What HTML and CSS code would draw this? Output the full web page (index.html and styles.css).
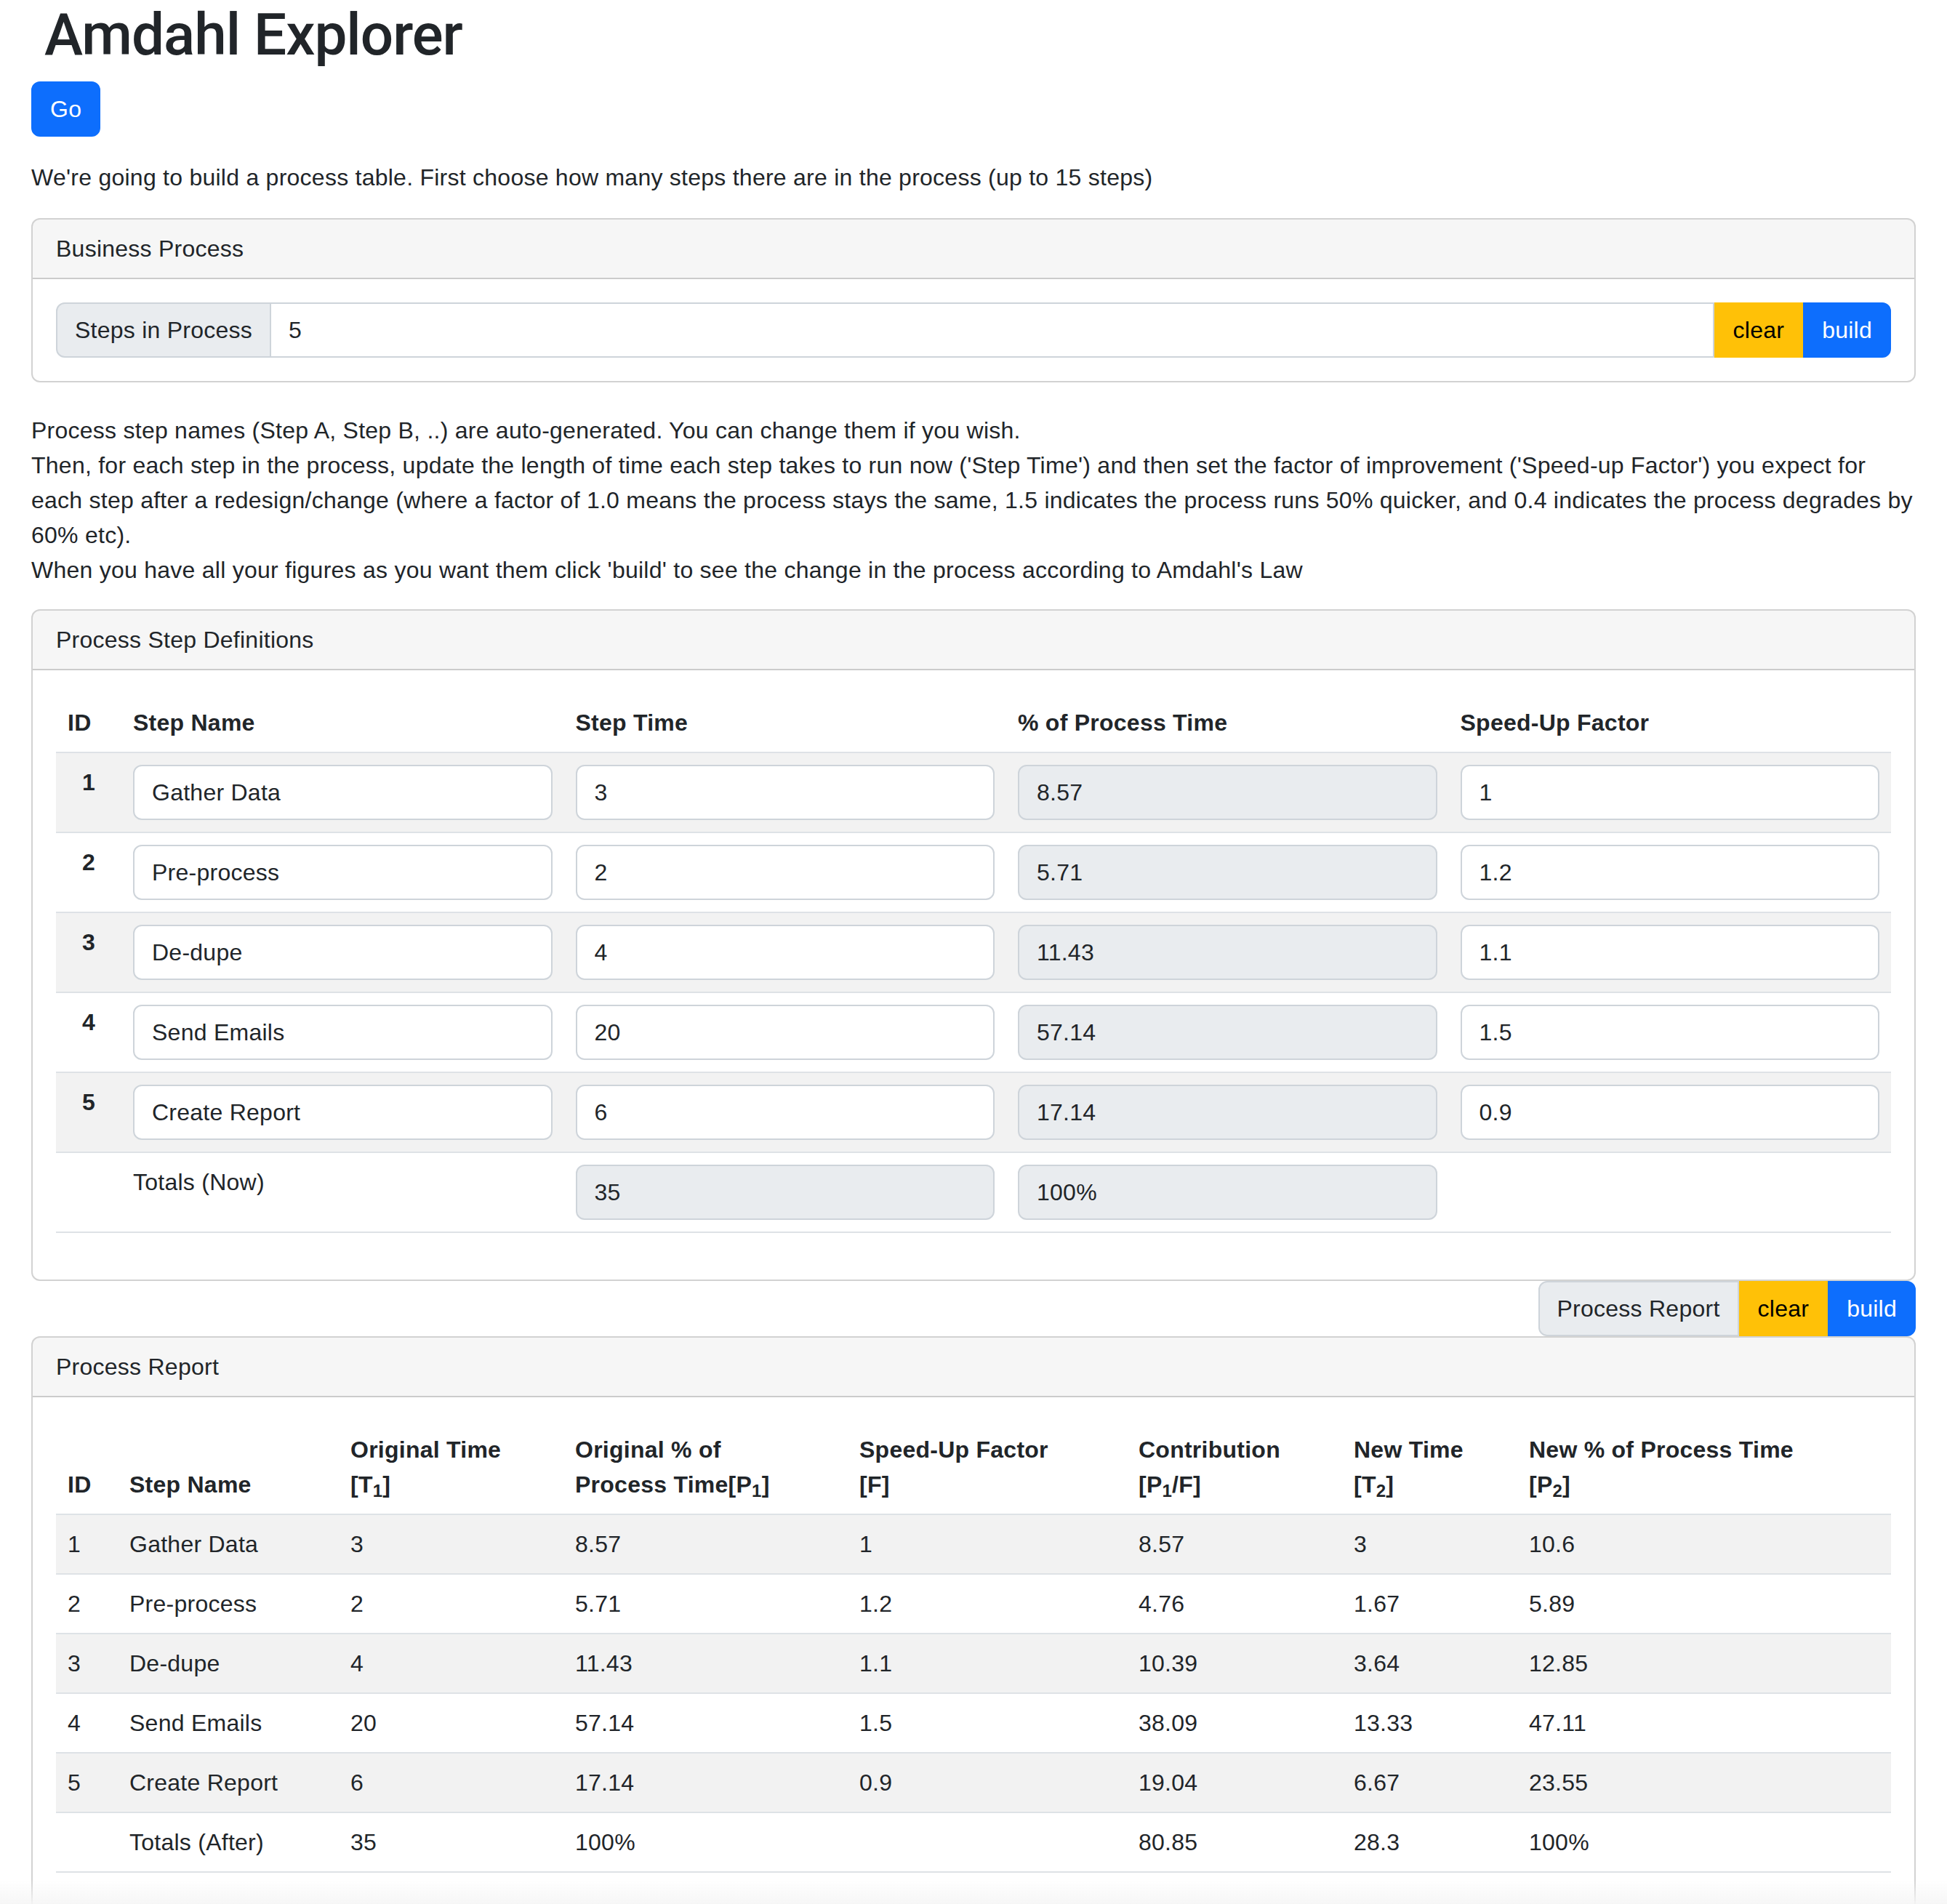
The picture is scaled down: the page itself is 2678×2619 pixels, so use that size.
FILE: index.html
```html
<!DOCTYPE html>
<html lang="en">
<head>
<meta charset="utf-8">
<title>Amdahl Explorer</title>
<link rel="stylesheet" href="styles.css">
</head>
<body>
<div class="page">
  <h1 class="title">Amdahl Explorer</h1>
  <div class="go-row"><button class="btn btn-primary">Go</button></div>
  <p class="intro">We're going to build a process table. First choose how many steps there are in the process (up to 15 steps)</p>

  <div class="card">
    <div class="card-header">Business Process</div>
    <div class="card-body">
      <div class="input-group">
        <span class="ig-text">Steps in Process</span>
        <input class="ig-input" type="text" value="5">
        <button class="btn btn-warning">clear</button>
        <button class="btn btn-primary">build</button>
      </div>
    </div>
  </div>

  <p class="instructions">Process step names (Step A, Step B, ..) are auto-generated. You can change them if you wish.<br>Then, for each step in the process, update the length of time each step takes to run now ('Step Time') and then set the factor of improvement ('Speed-up Factor') you expect for each step after a redesign/change (where a factor of 1.0 means the process stays the same, 1.5 indicates the process runs 50% quicker, and 0.4 indicates the process degrades by 60% etc).<br>When you have all your figures as you want them click 'build' to see the change in the process according to Amdahl's Law</p>

  <div class="card">
    <div class="card-header">Process Step Definitions</div>
    <div class="card-body">
      <table class="table defs">
        <thead>
          <tr>
            <th class="c-id">ID</th>
            <th>Step Name</th>
            <th>Step Time</th>
            <th>% of Process Time</th>
            <th>Speed-Up Factor</th>
          </tr>
        </thead>
        <tbody>
          <tr>
            <th class="row-id">1</th>
            <td><input class="fc" type="text" value="Gather Data"></td>
            <td><input class="fc" type="text" value="3"></td>
            <td><input class="fc ro" type="text" value="8.57" readonly></td>
            <td><input class="fc" type="text" value="1"></td>
          </tr>
          <tr>
            <th class="row-id">2</th>
            <td><input class="fc" type="text" value="Pre-process"></td>
            <td><input class="fc" type="text" value="2"></td>
            <td><input class="fc ro" type="text" value="5.71" readonly></td>
            <td><input class="fc" type="text" value="1.2"></td>
          </tr>
          <tr>
            <th class="row-id">3</th>
            <td><input class="fc" type="text" value="De-dupe"></td>
            <td><input class="fc" type="text" value="4"></td>
            <td><input class="fc ro" type="text" value="11.43" readonly></td>
            <td><input class="fc" type="text" value="1.1"></td>
          </tr>
          <tr>
            <th class="row-id">4</th>
            <td><input class="fc" type="text" value="Send Emails"></td>
            <td><input class="fc" type="text" value="20"></td>
            <td><input class="fc ro" type="text" value="57.14" readonly></td>
            <td><input class="fc" type="text" value="1.5"></td>
          </tr>
          <tr>
            <th class="row-id">5</th>
            <td><input class="fc" type="text" value="Create Report"></td>
            <td><input class="fc" type="text" value="6"></td>
            <td><input class="fc ro" type="text" value="17.14" readonly></td>
            <td><input class="fc" type="text" value="0.9"></td>
          </tr>
          <tr>
            <td></td>
            <td>Totals (Now)</td>
            <td><input class="fc ro" type="text" value="35" readonly></td>
            <td><input class="fc ro" type="text" value="100%" readonly></td>
            <td></td>
          </tr>
        </tbody>
      </table>
    </div>
  </div>

  <div class="action-bar">
    <div class="input-group">
      <span class="ig-text">Process Report</span>
      <button class="btn btn-warning">clear</button>
      <button class="btn btn-primary">build</button>
    </div>
  </div>

  <div class="card">
    <div class="card-header">Process Report</div>
    <div class="card-body">
      <table class="table report">
        <thead>
          <tr>
            <th class="r-id">ID</th>
            <th class="r-name">Step Name</th>
            <th class="r-t1">Original Time<br>[T<sub>1</sub>]</th>
            <th class="r-p1">Original % of<br>Process Time[P<sub>1</sub>]</th>
            <th class="r-f">Speed-Up Factor<br>[F]</th>
            <th class="r-c">Contribution<br>[P<sub>1</sub>/F]</th>
            <th class="r-t2">New Time<br>[T<sub>2</sub>]</th>
            <th class="r-p2">New % of Process Time<br>[P<sub>2</sub>]</th>
          </tr>
        </thead>
        <tbody>
          <tr><td>1</td><td>Gather Data</td><td>3</td><td>8.57</td><td>1</td><td>8.57</td><td>3</td><td>10.6</td></tr>
          <tr><td>2</td><td>Pre-process</td><td>2</td><td>5.71</td><td>1.2</td><td>4.76</td><td>1.67</td><td>5.89</td></tr>
          <tr><td>3</td><td>De-dupe</td><td>4</td><td>11.43</td><td>1.1</td><td>10.39</td><td>3.64</td><td>12.85</td></tr>
          <tr><td>4</td><td>Send Emails</td><td>20</td><td>57.14</td><td>1.5</td><td>38.09</td><td>13.33</td><td>47.11</td></tr>
          <tr><td>5</td><td>Create Report</td><td>6</td><td>17.14</td><td>0.9</td><td>19.04</td><td>6.67</td><td>23.55</td></tr>
          <tr><td></td><td>Totals (After)</td><td>35</td><td>100%</td><td></td><td>80.85</td><td>28.3</td><td>100%</td></tr>
        </tbody>
      </table>
    </div>
  </div>
</div>
<div class="bottom-fade"></div>
</body>
</html>
```

FILE: styles.css
```css
* { box-sizing: border-box; }

body {
  margin: 0;
  font-family: "Liberation Sans", Arial, sans-serif;
  font-size: 32px;
  line-height: 48px;
  letter-spacing: 0.25px;
  color: #212529;
  background: #fff;
}

.page {
  padding: 0 43px;
}

.title {
  margin: 0 0 16px;
  padding-left: 18px;
  font-family: Roboto, "Liberation Sans", Arial, sans-serif;
  font-weight: 500;
  font-size: 80px;
  line-height: 96px;
  letter-spacing: -1px;
}

.go-row {
  margin-bottom: 32px;
}

.btn {
  display: inline-block;
  font-family: inherit;
  font-size: 32px;
  line-height: 48px;
  letter-spacing: inherit;
  padding: 12px 24px;
  border: 2px solid transparent;
  border-radius: 12px;
  cursor: pointer;
}

.btn-primary {
  background: #0d6efd;
  border-color: #0d6efd;
  color: #fff;
}

.btn-warning {
  background: #ffc107;
  border-color: #ffc107;
  color: #000;
}

p {
  margin: 0 0 32px;
}

.instructions {
  margin-top: 42px;
  margin-bottom: 30px;
}

.card {
  border: 2px solid rgba(0, 0, 0, 0.175);
  border-radius: 12px;
  background: #fff;
}

.card-header {
  padding: 16px 32px;
  background: rgba(0, 0, 0, 0.035);
  border-bottom: 2px solid rgba(0, 0, 0, 0.175);
  border-radius: 10px 10px 0 0;
}

.card-body {
  padding: 32px;
}

.input-group {
  display: flex;
  align-items: stretch;
}

.ig-text {
  padding: 12px 24px;
  background: #e9ecef;
  border: 2px solid #ced4da;
  border-radius: 12px 0 0 12px;
  white-space: nowrap;
}

.ig-input {
  flex: 1;
  min-width: 0;
  margin-left: -2px;
  padding: 12px 24px;
  border: 2px solid #ced4da;
  font-family: inherit;
  font-size: 32px;
  line-height: 48px;
  letter-spacing: inherit;
  color: #212529;
  background: #fff;
  outline: none;
}

.input-group .btn {
  border-radius: 0;
}

.input-group .btn:last-child {
  border-radius: 0 12px 12px 0;
}

.action-bar {
  display: flex;
  justify-content: flex-end;
}

.table {
  width: 100%;
  border-collapse: collapse;
  table-layout: fixed;
  margin-bottom: 32px;
}

.table th,
.table td {
  padding: 16px;
  text-align: left;
  vertical-align: top;
  border-bottom: 2px solid #dee2e6;
}

.table thead th {
  vertical-align: bottom;
  white-space: nowrap;
}

.table tbody th.row-id {
  text-align: center;
}

.table tbody tr:nth-child(odd) > * {
  background: rgba(0, 0, 0, 0.05);
}

.c-id { width: 90px; }

.r-id { width: 85px; }
.r-name { width: 304px; }
.r-t1 { width: 309px; }
.r-p1 { width: 391px; }
.r-f { width: 384px; }
.r-c { width: 296px; }
.r-t2 { width: 241px; }
.r-p2 { width: 514px; }

.fc {
  display: block;
  width: 100%;
  padding: 12px 24px;
  font-family: inherit;
  font-size: 32px;
  line-height: 48px;
  letter-spacing: inherit;
  color: #212529;
  background: #fff;
  border: 2px solid #ced4da;
  border-radius: 12px;
  outline: none;
}

.fc.ro {
  background: #e9ecef;
}

sub {
  position: relative;
  font-size: 0.75em;
  line-height: 0;
  vertical-align: baseline;
  bottom: -0.25em;
}

.bottom-fade {
  position: fixed;
  left: 0;
  right: 0;
  bottom: 0;
  height: 34px;
  background: linear-gradient(rgba(245, 245, 245, 0), rgba(245, 245, 245, 0.9));
  pointer-events: none;
}
```
